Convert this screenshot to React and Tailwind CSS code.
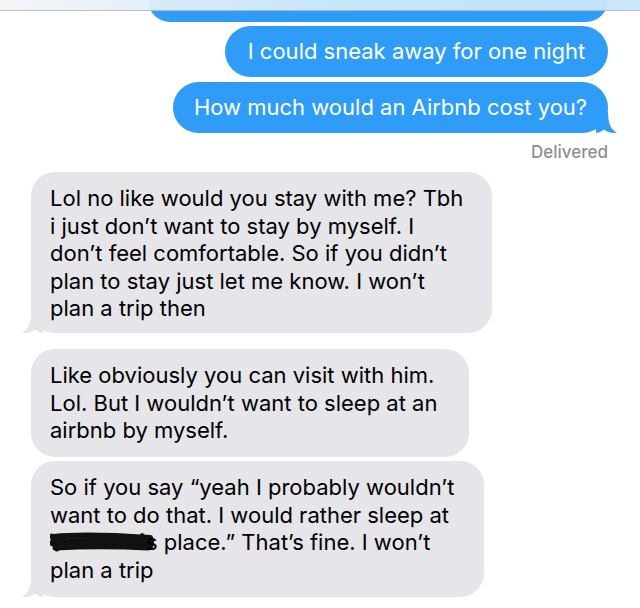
import React from "react";

const font = { fontFamily: "Inter, 'Noto Sans', sans-serif" };

function Tail({ color, side }) {
    // little iMessage tail drawn at the bottom corner of the bubble
    const pos = side === "right" ? "right-[-10px]" : "left-[-10px] scale-x-[-1]";
    return (
        <svg
            className={`absolute bottom-0 ${pos}`}
            width="22"
            height="22"
            viewBox="0 0 22 22"
        >
            <path
                d="M0 0 L12 0 C12 11 14 18 21 22 C16 22.5 11 21 8 18.5 C5 21 2 22 0 22 Z"
                fill={color}
            />
        </svg>
    );
}

function Redacted() {
    return (
        <svg
            width="104"
            height="22"
            viewBox="0 0 104 22"
            className="inline-block align-[-3px] mr-[-8px]"
        >
            <path d="M4 6 C30 3 70 5 100 7" stroke="#111" strokeWidth="6" strokeLinecap="round" fill="none" />
            <path d="M3 12 C35 9 75 11 102 12" stroke="#111" strokeWidth="7" strokeLinecap="round" fill="none" />
            <path d="M5 17 C40 15 80 16 98 17" stroke="#111" strokeWidth="5" strokeLinecap="round" fill="none" />
            <path d="M2 5 L7 18" stroke="#111" strokeWidth="5" strokeLinecap="round" />
            <path d="M92 4 L101 16" stroke="#111" strokeWidth="4" strokeLinecap="round" />
        </svg>
    );
}

export default function App() {
    return (
        <div className="relative w-[640px] h-[608px] overflow-hidden bg-white" style={font}>
            {/* blurred nav bar edge */}
            <div className="absolute top-0 left-0 right-0 h-[11px] bg-gradient-to-r from-[#f3f5f7] via-[#d2eafc] to-[#c9e6fb] border-b border-[#b9bcbf] opacity-95 z-10" />

            <div className="flex flex-col pr-[32px] pl-[31px]">
                {/* bubble cut off by the top of the screen */}
                <div className="self-end w-[460px] h-[22px] bg-[#2f9df7] rounded-b-[24px]" />

                <div className="self-end mt-[4px] w-[383px] h-[51px] rounded-[26px] bg-[#2f9df7] text-white text-[22px] leading-[51px] text-center whitespace-nowrap">
                    I could sneak away for one night
                </div>

                <div className="relative self-end mt-[5px] w-[435px] h-[51px] rounded-[26px] bg-[#2f9df7] text-white text-[22px] leading-[51px] text-center whitespace-nowrap">
                    How much would an Airbnb cost you?
                    <Tail color="#2f9df7" side="right" />
                </div>

                <div className="self-end mt-[9px] text-[17px] leading-[20px] font-medium text-[#8e8e93]">
                    Delivered
                </div>

                <div className="relative mt-[10px] w-[461px] h-[161px] rounded-[24px] bg-[#e5e5ea] text-black text-[22px] leading-[27.5px] pl-[19px] pt-[13px] whitespace-nowrap">
                    Lol no like would you stay with me? Tbh
                    <br />i just don’t want to stay by myself. I
                    <br />don’t feel comfortable. So if you didn’t
                    <br />plan to stay just let me know. I won’t
                    <br />plan a trip then
                    <Tail color="#e5e5ea" side="left" />
                </div>

                <div className="mt-[16px] w-[438px] h-[108px] rounded-[24px] bg-[#e5e5ea] text-black text-[22px] leading-[27.5px] pl-[19px] pt-[13px] whitespace-nowrap">
                    Like obviously you can visit with him.
                    <br />Lol. But I wouldn’t want to sleep at an
                    <br />airbnb by myself.
                </div>

                <div className="relative mt-[4px] w-[453px] h-[136px] rounded-[24px] bg-[#e5e5ea] text-black text-[22px] leading-[27.5px] pl-[19px] pt-[13px] whitespace-nowrap">
                    So if you say “yeah I probably wouldn’t
                    <br />want to do that. I would rather sleep at
                    <br />
                    <Redacted />
                    s place.” That’s fine. I won’t
                    <br />plan a trip
                    <Tail color="#e5e5ea" side="left" />
                </div>
            </div>
        </div>
    );
}
